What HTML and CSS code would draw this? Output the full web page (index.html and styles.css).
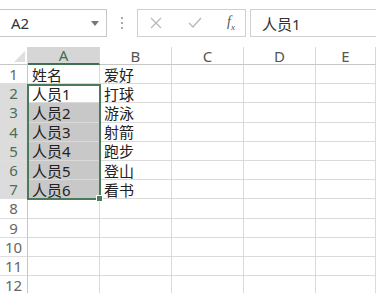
FILE: index.html
```html
<!DOCTYPE html>
<html lang="zh">
<head>
<meta charset="utf-8">
<link rel="stylesheet" href="styles.css">
</head>
<body>
<div class="bar">
  <div class="namebox"><span>A2</span><svg class="caret" width="8" height="5" viewBox="0 0 8 5"><path d="M0 0h8L4 5z" fill="#777"/></svg></div>
  <div class="dots"><i></i><i></i><i></i></div>
  <div class="btns">
    <svg width="12" height="12" viewBox="0 0 12 12"><path d="M1 1l10 10M11 1L1 11" stroke="#b9b9b9" stroke-width="1.3"/></svg>
    <svg width="14" height="12" viewBox="0 0 14 12"><path d="M1 6l4 4 8-9" stroke="#b9b9b9" stroke-width="1.4" fill="none"/></svg>
    <span class="fx">f<sub>x</sub></span>
  </div>
  <div class="formula">人员1</div>
</div>
<div class="sheet">
  <div class="corner"><svg width="11" height="11" viewBox="0 0 11 11"><path d="M11 0v11H0z" fill="#dedede"/></svg></div>
  <div class="ch sel">A</div><div class="ch">B</div><div class="ch">C</div><div class="ch">D</div><div class="ch">E</div>

  <div class="rh">1</div><div class="c">姓名</div><div class="c">爱好</div><div class="c"></div><div class="c"></div><div class="c"></div>
  <div class="rh hl">2</div><div class="c active">人员1</div><div class="c">打球</div><div class="c"></div><div class="c"></div><div class="c"></div>
  <div class="rh hl">3</div><div class="c shade">人员2</div><div class="c">游泳</div><div class="c"></div><div class="c"></div><div class="c"></div>
  <div class="rh hl">4</div><div class="c shade">人员3</div><div class="c">射箭</div><div class="c"></div><div class="c"></div><div class="c"></div>
  <div class="rh hl">5</div><div class="c shade">人员4</div><div class="c">跑步</div><div class="c"></div><div class="c"></div><div class="c"></div>
  <div class="rh hl">6</div><div class="c shade">人员5</div><div class="c">登山</div><div class="c"></div><div class="c"></div><div class="c"></div>
  <div class="rh hl">7</div><div class="c shade">人员6</div><div class="c">看书</div><div class="c"></div><div class="c"></div><div class="c"></div>
  <div class="rh">8</div><div class="c"></div><div class="c"></div><div class="c"></div><div class="c"></div><div class="c"></div>
  <div class="rh">9</div><div class="c"></div><div class="c"></div><div class="c"></div><div class="c"></div><div class="c"></div>
  <div class="rh">10</div><div class="c"></div><div class="c"></div><div class="c"></div><div class="c"></div><div class="c"></div>
  <div class="rh">11</div><div class="c"></div><div class="c"></div><div class="c"></div><div class="c"></div><div class="c"></div>
  <div class="rh">12</div><div class="c"></div><div class="c"></div><div class="c"></div><div class="c"></div><div class="c"></div>

  <div class="selection"><span class="handle"></span></div>
</div>
</body>
</html>
```

FILE: styles.css
```css
html, body {
  margin: 0;
  padding: 0;
  background: #fff;
  overflow: hidden;
}
body {
  width: 376px;
  height: 293px;
  font-family: "Segoe UI", "Noto Sans", "Noto Sans CJK SC", sans-serif;
  color: #222;
}
.bar {
  display: flex;
  align-items: center;
  height: 47px;
  box-sizing: border-box;
}
.namebox {
  width: 107px;
  height: 28px;
  box-sizing: border-box;
  border: 1px solid #c6c6c6;
  border-left: none;
  display: flex;
  align-items: center;
  justify-content: space-between;
  padding: 0 7px 0 11px;
  font-size: 15px;
  color: #333;
  margin-top: -1px;
}
.dots {
  width: 30px;
  display: flex;
  flex-direction: column;
  align-items: center;
  gap: 3px;
  margin-top: -1px;
}
.dots i {
  width: 2px;
  height: 2px;
  background: #a8a8a8;
  display: block;
}
.btns {
  width: 109px;
  height: 28px;
  box-sizing: border-box;
  border: 1px solid #d0d0d0;
  display: flex;
  align-items: center;
  padding: 0 10px 0 12px;
  justify-content: space-between;
  margin-top: -1px;
}
.fx {
  font-family: "Liberation Serif", serif;
  font-style: italic;
  font-size: 14px;
  color: #555;
}
.fx sub {
  font-size: 9px;
}
.formula {
  margin-left: 4px;
  flex: 1;
  height: 28px;
  box-sizing: border-box;
  border: 1px solid #d0d0d0;
  border-right: none;
  display: flex;
  align-items: center;
  padding-left: 11px;
  font-size: 15px;
  color: #333;
  margin-top: -1px;
}
.sheet {
  position: relative;
  display: grid;
  grid-template-columns: 28px 72px 72px 72px 72px 1fr;
  grid-template-rows: 18px repeat(12, 19.2px);
}
.corner {
  display: flex;
  align-items: flex-end;
  justify-content: flex-end;
  padding: 0 2px 2px 0;
  border-bottom: 1px solid #c6c6c6;
  border-right: 1px solid #d8d8d8;
  box-sizing: border-box;
}
.ch {
  box-sizing: border-box;
  border-right: 1px solid #d8d8d8;
  border-bottom: 1px solid #c6c6c6;
  display: flex;
  align-items: center;
  justify-content: center;
  font-size: 15px;
  color: #555;
}
.ch.sel {
  background: #d6d6d6;
  border-bottom: 2px solid #3f7151;
  color: #3f6f50;
}
.rh {
  box-sizing: border-box;
  border-right: 1px solid #c6c6c6;
  border-bottom: 1px solid #dedede;
  display: flex;
  align-items: center;
  justify-content: center;
  font-size: 15px;
  color: #666;
}
.rh.hl {
  background: #dcdcdc;
  color: #4d6d58;
}
.c {
  box-sizing: border-box;
  border-right: 1px solid #dadada;
  border-bottom: 1px solid #dadada;
  display: flex;
  align-items: center;
  padding-left: 4px;
  font-size: 15px;
  color: #222;
  white-space: nowrap;
}
.c.shade {
  background: #c8c8c8;
}
.selection {
  position: absolute;
  left: 27px;
  top: 37.2px;
  width: 74px;
  height: 116.2px;
  box-sizing: border-box;
  border: 2px solid #4a7a5a;
  pointer-events: none;
}
.handle {
  position: absolute;
  right: -4px;
  bottom: -4px;
  width: 5px;
  height: 5px;
  background: #4a7a5a;
  border: 1px solid #fff;
}
```
